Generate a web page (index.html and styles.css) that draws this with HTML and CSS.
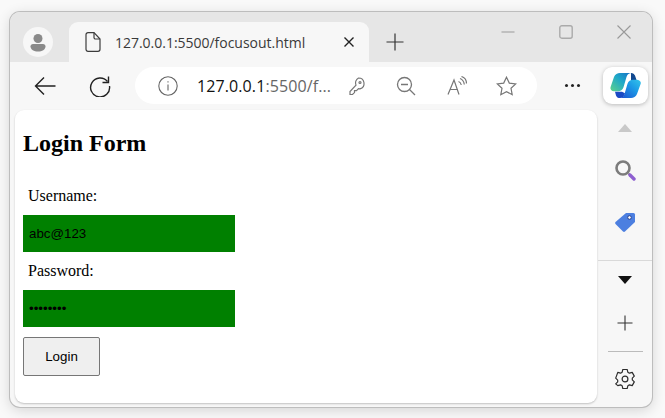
FILE: index.html
```html
<!DOCTYPE html>
<html>
  <head>
    <meta charset="UTF-8" />
    <title>Login Form</title>
    <link rel="stylesheet" href="styles.css">
  </head>
  <body>
    <div class="window">
      <div class="tab-strip">
        <div class="avatar">
          <svg width="30" height="30" viewBox="0 0 30 30">
            <circle cx="15" cy="11.5" r="4.5" fill="#8a8a8a" />
            <path d="M7.5 19.5c0-1.4 1-2.5 2.5-2.5h10c1.500 0 2.500 1.100 2.500 2.500 0 3-3.500 5-7.500 5s-7.500-2-7.500-5z" fill="#8a8a8a" />
          </svg>
        </div>
        <div class="tab">
          <svg class="tab-file" width="16" height="20" viewBox="0 0 16 20" fill="none" stroke="#3c3c3c" stroke-width="1.200">
            <path d="M3 .7h6l6 6.300v10.300a2 2 0 0 1-2 2H3a2 2 0 0 1-2-2V2.700a2 2 0 0 1 2-2z" />
            <path d="M9 .7v4.800a1.500 1.500 0 0 0 1.500 1.500H15" />
          </svg>
          <span class="tab-title">127.0.0.1:5500/focusout.html</span>
          <svg class="tab-close" width="12" height="12" viewBox="0 0 12 12" stroke="#222" stroke-width="1.400">
            <path d="M1.500 1.500l9 9M10.500 1.500l-9 9" />
          </svg>
        </div>
        <svg class="new-tab" width="18" height="18" viewBox="0 0 18 18" stroke="#333" stroke-width="1.200">
          <path d="M9 .5v17M.5 9h17" />
        </svg>
        <div class="win-controls">
          <svg width="14" height="14" viewBox="0 0 14 14" stroke="#999" stroke-width="1.200"><path d="M.5 7h13" /></svg>
          <svg width="14" height="14" viewBox="0 0 14 14" fill="none" stroke="#aaa" stroke-width="1.400"><rect x=".8" y=".8" width="12.400" height="12.400" rx="2" /></svg>
          <svg width="14" height="14" viewBox="0 0 14 14" stroke="#999" stroke-width="1.100"><path d="M.5.500l13 13M13.500.5l-13 13" /></svg>
        </div>
      </div>

      <div class="toolbar">
        <svg class="nav-back" width="22" height="20" viewBox="0 0 22 20" fill="none" stroke="#222" stroke-width="1.400">
          <path d="M1.500 10h20M10 1.500L1.500 10l8.500 8.500" />
        </svg>
        <svg class="nav-reload" width="22" height="22" viewBox="0 0 22 22" fill="none" stroke="#222" stroke-width="1.400">
          <path d="M18.500 6.500A9.500 9.500 0 1 0 20.500 11" />
          <path d="M19.500 1.500v6h-6" />
        </svg>
        <div class="address">
          <svg class="addr-info" width="20" height="20" viewBox="0 0 20 20" fill="none" stroke="#666" stroke-width="1.100">
            <circle cx="10" cy="10" r="9.200" />
            <path d="M10 8.500v6M10 5.200v1.300" />
          </svg>
          <span class="addr-url"><span class="addr-host">127.0.0.1</span>:5500/f...</span>
          <svg class="addr-key" width="18" height="20" viewBox="0 0 18 20" fill="none" stroke="#777" stroke-width="1.200">
            <path d="M10.500 2a5.500 5.500 0 0 1 1.500 10.800l-1.500-.2-2 2h-2v2l-2 1.900H2v-3l6-6.300A5.500 5.500 0 0 1 10.500 2z" />
            <circle cx="12" cy="6.500" r="1" />
          </svg>
          <svg class="addr-zoom" width="20" height="20" viewBox="0 0 20 20" fill="none" stroke="#777" stroke-width="1.300">
            <circle cx="8.500" cy="8.500" r="7" />
            <path d="M5 8.500h7M13.500 13.500l5.500 5.500" />
          </svg>
          <svg class="addr-read" width="20" height="20" viewBox="0 0 20 20" fill="none" stroke="#777" stroke-width="1.200">
            <path d="M1 18.500L7 4l5 14.500M3 13.500h8" />
            <path d="M11.500 5.500c1.500.5 2.500 2 2.800 3.500M13 2.500c2.500 1 4 3.500 4.300 6M14.500.5c3 1 5 4 5 7" />
          </svg>
          <svg class="addr-star" width="21" height="20" viewBox="0 0 21 20" fill="none" stroke="#777" stroke-width="1.200">
            <path d="M10.500 1.200l2.800 5.900 6.400.8-4.700 4.400 1.200 6.400-5.700-3.100-5.700 3.100 1.200-6.400L1.300 7.900l6.400-.8z" />
          </svg>
        </div>
        <div class="more"><i></i><i></i><i></i></div>
        <div class="copilot">
          <svg width="31" height="27" viewBox="0 0 31 30" preserveAspectRatio="none">
            <defs>
              <linearGradient id="cp-left" x1="0" y1="1" x2="1" y2="0">
                <stop offset="0" stop-color="#5fd38a" />
                <stop offset=".55" stop-color="#1fa8c9" />
                <stop offset="1" stop-color="#1670c4" />
              </linearGradient>
              <linearGradient id="cp-right" x1="0" y1="1" x2="1" y2="0">
                <stop offset="0" stop-color="#1d4fd0" />
                <stop offset=".6" stop-color="#1c9be6" />
                <stop offset="1" stop-color="#35c5ea" />
              </linearGradient>
            </defs>
            <path d="M10 1h11c-2.500.5-3.800 2-4.500 4.500L13.500 17c-.8 3-3 4.500-5.500 4.500H4C1.500 21.500 0 19.500.5 17L4 5.500C5 2.500 7.500 1 10 1z" fill="url(#cp-left)" />
            <path d="M21 1c2 0 3.500 1.300 4 3l1.500 5H21z" fill="#12488f" />
            <path d="M21 29H10c2.500-.5 3.800-2 4.500-4.500L17.500 13c.8-3 3-4.500 5.500-4.500h3.500c3 0 4.800 2 4.200 4.500L27 24.500C26 27.500 23.500 29 21 29z" fill="url(#cp-right)" />
            <path d="M10 29c-2 0-3.500-1.300-4-3l-1-4h7l3 1.500-1 2.500c-.6 1.500-1.800 2.500-4 3z" fill="#1a49c4" />
          </svg>
        </div>
      </div>

      <div class="content">
        <div class="page">
          <h2>Login Form</h2>
          <form>
            <label class="field-label" for="username">Username:</label>
            <input class="field" id="username" type="text" value="abc@123" />
            <label class="field-label" for="password">Password:</label>
            <input class="field" id="password" type="password" value="abcdefgh" />
            <button class="login-btn" type="button">Login</button>
          </form>
        </div>

        <div class="sidebar">
          <div class="side-top">
            <div class="caret-up"></div>
            <svg class="side-search" width="22" height="22" viewBox="0 0 22 22" fill="none">
              <circle cx="9" cy="9" r="6.500" stroke="#7c7c7c" stroke-width="2.600" />
              <path d="M14.500 14.500l1.500 1.500" stroke="#7c7c7c" stroke-width="2" />
              <path d="M16 16l4 4" stroke="#8e5fd0" stroke-width="3.400" stroke-linecap="round" />
            </svg>
            <svg class="side-tag" width="22" height="22" viewBox="0 0 22 22">
              <path d="M12 2h7.500a1.500 1.500 0 0 1 1.500 1.500V11L11 20.500a1.500 1.500 0 0 1-2 0L1.500 13a1.500 1.500 0 0 1 0-2z" fill="#4c7fe0" />
              <circle cx="15.500" cy="6.500" r="1.800" fill="#fff" stroke="#27408f" stroke-width="1" />
            </svg>
          </div>
          <div class="side-bottom">
            <div class="caret-down"></div>
            <svg class="side-plus" width="16" height="16" viewBox="0 0 16 16" stroke="#333" stroke-width="1.100">
              <path d="M8 .5v15M.5 8h15" />
            </svg>
            <div class="side-rule"></div>
            <svg class="side-gear" width="22" height="22" viewBox="0 0 22 22" fill="none" stroke="#2c2c2c" stroke-width="1.200">
              <path d="M8.800 1.500h4.400l.7 2.800 1.500.9 2.800-.8 2.100 3.700-2 2 0 1.800 2 2-2.100 3.700-2.800-.8-1.500.9-.7 2.800H8.800l-.7-2.800-1.500-.9-2.800.8L1.700 15.900l2-2 0-1.800-2-2L3.800 4.400l2.800.8 1.500-.9z" stroke-linejoin="round" />
              <circle cx="11" cy="11" r="2.900" />
            </svg>
          </div>
        </div>
      </div>
    </div>
  </body>
</html>
```

FILE: styles.css
```css
body {
  margin: 0;
  padding: 12px 13px 11px 10px;
  background-color: #f9f9f9;
  font-family: "Liberation Serif", serif;
}

svg {
  display: block;
  flex: none;
}

.window {
  height: 395px;
  display: flex;
  flex-direction: column;
  background-color: #f7f7f7;
  border-radius: 10px;
  box-shadow: 0 0 0 1px #bdbdbd, 0 3px 14px rgba(0, 0, 0, 0.16);
  overflow: hidden;
}

/* tabs */
.tab-strip {
  height: 50px;
  flex: none;
  display: flex;
  align-items: flex-start;
  background-color: #e6e6e6;
}
.avatar {
  width: 30px;
  height: 30px;
  margin: 15px 0 0 13px;
  border-radius: 50%;
  background-color: #f7f7f7;
}
.tab {
  width: 300px;
  height: 40px;
  margin: 10px 0 0 16px;
  padding-left: 16px;
  box-sizing: border-box;
  display: flex;
  align-items: center;
  background-color: #f7f7f7;
  border-radius: 9px 9px 0 0;
}
.tab-title {
  margin-left: 14px;
  width: 228px;
  font: 14px "Open Sans", sans-serif;
  letter-spacing: -0.02px;
  color: #3a3a3a;
  white-space: nowrap;
}
.new-tab {
  margin: 21px 0 0 17px;
}
.win-controls {
  margin: 13px 0 0 97px;
  display: flex;
  column-gap: 44px;
}

/* toolbar */
.toolbar {
  height: 47px;
  flex: none;
  display: flex;
  align-items: center;
}
.nav-back {
  margin-left: 24px;
}
.nav-reload {
  margin-left: 33px;
}
.address {
  width: 402px;
  height: 37px;
  margin-left: 24px;
  box-sizing: border-box;
  padding-left: 23px;
  display: flex;
  align-items: center;
  background-color: #fff;
  border-radius: 19px;
}
.addr-url {
  width: 134px;
  margin-left: 19px;
  font: 16px "Open Sans", sans-serif;
  letter-spacing: 0.1px;
  color: #666;
  white-space: nowrap;
}
.addr-host {
  color: #111;
}
.addr-key {
  margin-left: 17px;
}
.addr-zoom {
  margin-left: 30px;
}
.addr-read {
  margin-left: 31px;
}
.addr-star {
  margin-left: 29px;
}
.more {
  margin-left: 28px;
  display: flex;
  column-gap: 3px;
}
.more i {
  width: 3px;
  height: 3px;
  border-radius: 50%;
  background-color: #222;
}
.copilot {
  width: 45px;
  height: 37px;
  margin-left: 23px;
  display: flex;
  align-items: center;
  justify-content: center;
  background-color: #fff;
  border-radius: 9px;
  box-shadow: 0 1px 4px rgba(0, 0, 0, 0.25);
}

/* page */
.content {
  flex: 1;
  display: flex;
  min-height: 0;
}
.page {
  width: 582px;
  height: 293px;
  margin: 1px 0 0 5px;
  padding: 0 8px;
  box-sizing: border-box;
  display: flow-root;
  background-color: #fff;
  border-radius: 9px;
  box-shadow: 0 1px 2px rgba(0, 0, 0, 0.22);
}
h2 {
  margin: 20px 0;
  font-size: 24px;
  line-height: 27px;
}
.field-label {
  display: block;
  padding: 10px 5px;
  font-size: 16px;
  line-height: 18px;
}
.field {
  display: block;
  width: 212px;
  height: 37px;
  padding: 0 6px;
  box-sizing: border-box;
  border: none;
  outline: none;
  background-color: green;
  color: black;
  font: 13.33px "Liberation Sans", sans-serif;
}
.login-btn {
  display: block;
  width: 77px;
  height: 39px;
  margin-top: 10px;
  padding: 0;
  background-color: #efefef;
  border: 1px solid #767676;
  border-radius: 2px;
  color: black;
  font: 13.33px "Liberation Sans", sans-serif;
}

/* right rail */
.sidebar {
  width: 55px;
  display: flex;
  flex-direction: column;
  border-left: 1px solid transparent;
  box-sizing: border-box;
}
.side-top {
  height: 151px;
  flex: none;
  display: flex;
  flex-direction: column;
  align-items: center;
  border-bottom: 1px solid #d9d9d9;
}
.caret-up {
  width: 0;
  height: 0;
  margin-top: 15px;
  border-left: 7px solid transparent;
  border-right: 7px solid transparent;
  border-bottom: 8px solid #c9c9c9;
}
.side-search {
  margin-top: 27px;
}
.side-tag {
  margin-top: 30px;
}
.side-bottom {
  flex: 1;
  display: flex;
  flex-direction: column;
  align-items: center;
}
.caret-down {
  width: 0;
  height: 0;
  margin-top: 15px;
  border-left: 7px solid transparent;
  border-right: 7px solid transparent;
  border-top: 8px solid #111;
}
.side-plus {
  margin-top: 31px;
}
.side-rule {
  width: 35px;
  height: 1px;
  margin-top: 20px;
  background-color: #bbb;
}
.side-gear {
  margin-top: 16px;
}
```
